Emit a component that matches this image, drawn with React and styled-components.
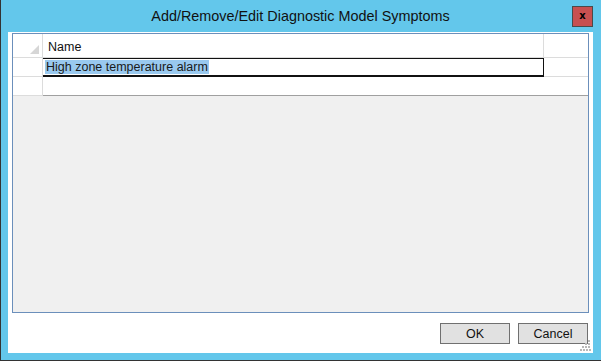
import React from 'react';
import styled, { createGlobalStyle } from 'styled-components';

const GlobalStyle = createGlobalStyle`
  html, body {
    margin: 0;
    padding: 0;
    background: #ffffff;
  }
  body {
    font-family: "Liberation Sans", Arial, sans-serif;
  }
`;

const Window = styled.div`
  box-sizing: border-box;
  width: 601px;
  height: 361px;
  background: #63c7eb;
  border-left: 1px solid #333333;
  border-bottom: 1px solid #333333;
  padding: 0 8px 7px 7px;
  display: flex;
  flex-direction: column;
`;

const TitleBar = styled.div`
  height: 32px;
  flex: none;
  display: flex;
  align-items: center;
  justify-content: center;
  position: relative;
`;

const Title = styled.div`
  font-family: "Liberation Sans", Arial, sans-serif;
  font-size: 14.4px;
  color: #111111;
  margin-top: -1px;
`;

const CloseButton = styled.div`
  position: absolute;
  right: 0;
  top: 6px;
  box-sizing: border-box;
  width: 21px;
  height: 21px;
  background: #c75050;
  border: 1px solid #4a4a4a;
  display: flex;
  align-items: center;
  justify-content: center;
  font-family: "DejaVu Sans", sans-serif;
  font-weight: 700;
  font-size: 10px;
  color: #000000;
  padding-bottom: 2px;
`;

const Client = styled.div`
  flex: 1;
  background: #ffffff;
  padding: 1px 4px 9px 4px;
  display: flex;
  flex-direction: column;
  position: relative;
`;

const Grid = styled.div`
  box-sizing: border-box;
  height: 280px;
  border: 1px solid #6b8fbb;
  background: #f0f0f0;
  display: flex;
  flex-direction: column;
`;

const Row = styled.div`
  display: flex;
  height: ${(p) => p.$h}px;
  background: #ffffff;
`;

const RowHeader = styled.div`
  box-sizing: border-box;
  width: 30px;
  flex: none;
  border-right: 1px solid #dcdcdc;
  border-bottom: 1px solid #dcdcdc;
  position: relative;
`;

const Corner = styled.div`
  position: absolute;
  right: 3px;
  bottom: 3px;
  width: 0;
  height: 0;
  border-left: 9px solid transparent;
  border-bottom: 9px solid #d6d6d6;
`;

const Cell = styled.div`
  box-sizing: border-box;
  flex: ${(p) => (p.$grow ? 1 : 'none')};
  width: ${(p) => (p.$w ? `${p.$w}px` : 'auto')};
  border-right: ${(p) => (p.$sep ? '1px solid #dcdcdc' : 'none')};
  border-bottom: 1px solid ${(p) => p.$line || '#dcdcdc'};
  font-size: 12.5px;
  color: #111111;
  display: flex;
  align-items: center;
  padding: 2px 0 0 5px;
`;

const EditBox = styled.div`
  box-sizing: border-box;
  width: 502px;
  flex: none;
  margin-left: -1px;
  border: 1px solid #111111;
  border-bottom-width: 2px;
  display: flex;
  align-items: center;
  padding-left: 2px;
`;

const Selected = styled.span`
  background: #99c9ef;
  font-size: 12.5px;
  color: #1a1a1a;
  line-height: 14px;
  padding: 0 1px;
`;

const Buttons = styled.div`
  display: flex;
  justify-content: flex-end;
  gap: 8px;
  margin-top: 10px;
  padding-right: 1px;
`;

const Button = styled.div`
  box-sizing: border-box;
  width: 70px;
  height: 21px;
  background: #e1e1e1;
  border: 1px solid #707070;
  display: flex;
  align-items: center;
  justify-content: center;
  font-size: 12.5px;
  color: #111111;
`;

const Grip = styled.svg`
  position: absolute;
  right: 1px;
  bottom: 1px;
`;

const gripDots = [
  [8, 0],
  [5, 3], [8, 3],
  [2, 6], [5, 6], [8, 6],
  [0, 9], [3, 9], [6, 9], [9, 9],
];

const App = () => {
  return (
    <>
      <GlobalStyle />
      <Window>
        <TitleBar>
          <Title>Add/Remove/Edit Diagnostic Model Symptoms</Title>
          <CloseButton>x</CloseButton>
        </TitleBar>
        <Client>
          <Grid>
            <Row $h={24}>
              <RowHeader>
                <Corner />
              </RowHeader>
              <Cell $w={501} $sep>Name</Cell>
              <Cell $grow />
            </Row>
            <Row $h={19}>
              <RowHeader />
              <EditBox>
                <Selected>High zone temperature alarm</Selected>
              </EditBox>
              <Cell $grow />
            </Row>
            <Row $h={19}>
              <RowHeader />
              <Cell $grow $line="#a0a0a0" />
            </Row>
          </Grid>
          <Buttons>
            <Button>OK</Button>
            <Button>Cancel</Button>
          </Buttons>
          <Grip width="12" height="12" viewBox="0 0 12 12">
            {gripDots.map(([x, y]) => (
              <rect key={`${x}-${y}`} x={x} y={y} width="2" height="2" fill="#b8b8b8" />
            ))}
          </Grip>
        </Client>
      </Window>
    </>
  );
};

export default App;
